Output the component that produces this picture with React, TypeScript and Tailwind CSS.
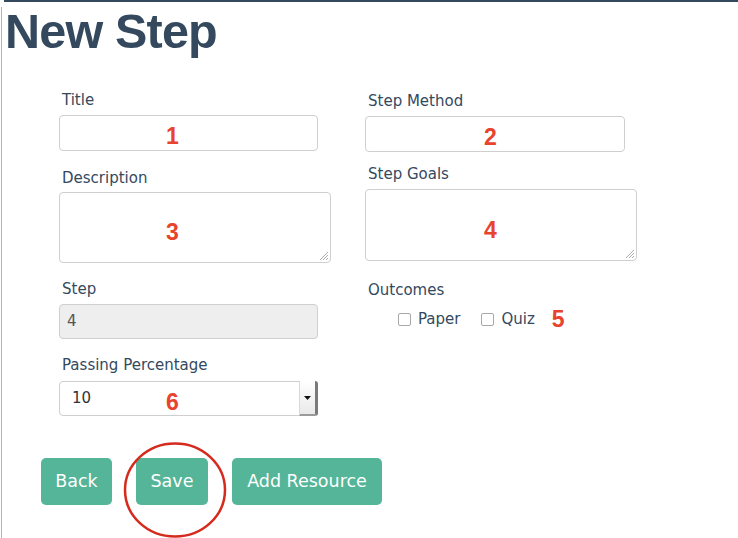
import React from 'react'

const labelCls = "block pl-[3px] h-[20px] leading-[20px] text-[15px] text-[#34495e]"
const numCls = "absolute font-['Liberation_Sans'] font-bold text-[23px] leading-none text-[#e8432c]"

function Grip() {
  return (
    <svg className="absolute right-[2px] bottom-[2px]" width="9" height="9" viewBox="0 0 9 9">
      <line x1="1" y1="9" x2="9" y2="1" stroke="#aaa" strokeWidth="1" />
      <line x1="4" y1="9" x2="9" y2="4" stroke="#aaa" strokeWidth="1" />
      <line x1="7" y1="9" x2="9" y2="7" stroke="#aaa" strokeWidth="1" />
    </svg>
  )
}

function Box({ className, children }: { className: string, children?: React.ReactNode }) {
  return (
    <div className={`relative border border-[#cfcfcf] rounded-[4px] bg-white ${className}`}>
      {children}
    </div>
  )
}

function Check({ label }: { label: string }) {
  return (
    <span className="flex items-center">
      <span className="w-[13px] h-[13px] border border-[#a8a8a8] rounded-[2px] bg-white" />
      <span className="ml-[7px] text-[15px] text-[#34495e]">{label}</span>
    </span>
  )
}

export default function App() {
  return (
    <div className="relative w-[738px] h-[538px] overflow-hidden bg-white font-['DejaVu_Sans',sans-serif]">
      <div className="ml-[4px] h-[2px] bg-[#34495e]" />
      <div className="ml-px h-[536px] border-l border-[#b4b4b4]">
        <h1 className="mt-[5px] ml-[3px] h-[48px] font-['Liberation_Sans',sans-serif] font-bold text-[48.5px] leading-none tracking-[-0.8px] text-[#34495e]">
          New Step
        </h1>

        <div className="mt-[35px] ml-[57px] flex">
          {/* left column */}
          <div className="w-[272px] flex flex-col">
            <label className={labelCls}>Title</label>
            <Box className="mt-[5px] w-[259px] h-[36px]">
              <span className={`${numCls} left-[106px] top-[9px]`}>1</span>
            </Box>

            <label className={`${labelCls} mt-[17px]`}>Description</label>
            <Box className="mt-[4px] w-[272px] h-[71px]">
              <span className={`${numCls} left-[106px] top-[28px]`}>3</span>
              <Grip />
            </Box>

            <label className={`${labelCls} mt-[16px]`}>Step</label>
            <Box className="mt-[5px] w-[259px] h-[35px] !bg-[#eeeeee] flex items-center pl-[7px]">
              <span className="text-[15px] text-[#555]">4</span>
            </Box>

            <label className={`${labelCls} mt-[16px]`}>Passing Percentage</label>
            <Box className="mt-[6px] w-[259px] h-[35px] flex items-center pl-[12px]">
              <span className="text-[15px] text-[#333]">10</span>
              <span className={`${numCls} left-[106px] top-[9px]`}>6</span>
              <div className="absolute right-[-1px] top-[-1px] bottom-[-1px] w-[19px] flex items-center justify-center rounded-r-[3px] border-l border-[#d8d8d8] border-r-[3px] border-r-[#7a7a7a] border-b-2 border-b-[#9a9a9a] bg-gradient-to-b from-white to-[#e9e9e9]">
                <svg width="7" height="4" viewBox="0 0 7 4">
                  <path d="M0 0h7L3.5 4z" fill="#111" />
                </svg>
              </div>
            </Box>
          </div>

          {/* right column */}
          <div className="ml-[34px] w-[272px] flex flex-col mt-px">
            <label className={labelCls}>Step Method</label>
            <Box className="mt-[5px] w-[260px] h-[36px]">
              <span className={`${numCls} left-[118px] top-[9px]`}>2</span>
            </Box>

            <label className={`${labelCls} mt-[12px]`}>Step Goals</label>
            <Box className="mt-[5px] w-[272px] h-[72px]">
              <span className={`${numCls} left-[118px] top-[29px]`}>4</span>
              <Grip />
            </Box>

            <label className={`${labelCls} mt-[19px]`}>Outcomes</label>
            <div className="mt-[9px] h-[20px] pl-[33px] flex items-center gap-[21px]">
              <Check label="Paper" />
              <Check label="Quiz" />
              <span className="ml-[-4px] font-['Liberation_Sans'] font-bold text-[23px] leading-none text-[#e8432c]">5</span>
            </div>
          </div>
        </div>

        <div className="mt-[42px] ml-[39px] flex gap-[24px]">
          <button className="w-[71px] h-[47px] rounded-[5px] bg-[#54b598] text-white text-[17.5px]">Back</button>
          <button className="w-[72px] h-[47px] rounded-[5px] bg-[#54b598] text-white text-[17.5px]">Save</button>
          <button className="w-[150px] h-[47px] rounded-[5px] bg-[#54b598] text-white text-[17.5px]">Add Resource</button>
        </div>
      </div>

      <svg className="absolute left-[123px] top-[441px]" width="104" height="98" viewBox="0 0 104 98">
        <ellipse cx="52" cy="49" rx="50" ry="46.5" fill="none" stroke="#d52a1e" strokeWidth="2.5" />
      </svg>
    </div>
  )
}
